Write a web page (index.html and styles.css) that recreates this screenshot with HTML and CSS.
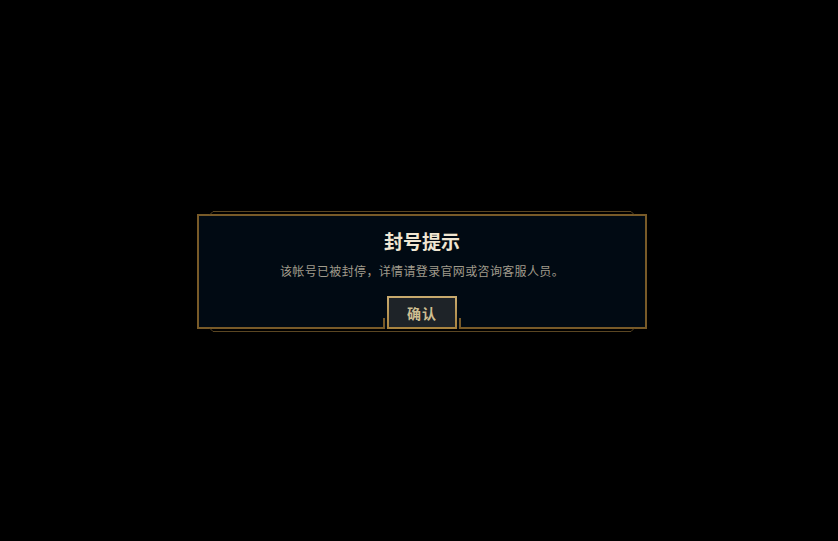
FILE: index.html
```html
<!DOCTYPE html>
<html lang="zh-CN">
<head>
<meta charset="utf-8">
<title>封号提示</title>
<link rel="stylesheet" href="styles.css">
</head>
<body>
<div class="stage">
  <div class="dialog">
    <svg class="deco" aria-hidden="true">
      <polyline points="13,0.5 16,-2.5 434,-2.5 437,0.5" />
      <polyline points="13,114.5 16,117.5 434,117.5 437,114.5" />
    </svg>
    <h1 class="title">封号提示</h1>
    <p class="message">该帐号已被封停，详情请登录官网或咨询客服人员。</p>
    <div class="actions">
      <div class="btn-wrap">
        <button class="btn">确认</button>
      </div>
    </div>
  </div>
</div>
</body>
</html>
```
FILE: styles.css
```css
html, body {
  margin: 0;
  padding: 0;
  background: #000;
  height: 100%;
}
.stage {
  height: 100%;
  box-sizing: border-box;
  padding: 2px 0 0 6px;
  display: flex;
  align-items: center;
  justify-content: center;
  font-family: "Noto Sans CJK SC", "Noto Sans", sans-serif;
}
.dialog {
  position: relative;
  width: 450px;
  box-sizing: border-box;
  border: 2px solid #785a28;
  background: #010a13;
  display: flex;
  flex-direction: column;
  align-items: center;
  padding-top: 13px;
}
.deco {
  position: absolute;
  left: -2px;
  top: -2px;
  width: 450px;
  height: 115px;
  overflow: visible;
  pointer-events: none;
}
.deco polyline {
  fill: none;
  stroke: #5b4622;
  stroke-width: 1;
}
.title {
  margin: 0;
  font-size: 19px;
  line-height: 24px;
  font-weight: 700;
  color: #f0e6d2;
}
.message {
  margin: 9px 0 0;
  font-size: 12px;
  line-height: 18px;
  letter-spacing: 0.35px;
  color: #a09b8c;
}
.actions {
  margin-top: 16px;
  margin-bottom: -2px;
  display: flex;
  justify-content: center;
}
.btn-wrap {
  position: relative;
  padding: 0 2px;
}
.btn-wrap::before {
  content: "";
  position: absolute;
  left: -2px;
  right: -2px;
  bottom: 0;
  height: 11px;
  background: #010a13;
  border-left: 2px solid #785a28;
  border-right: 2px solid #785a28;
}
.btn {
  position: relative;
  display: block;
  width: 70px;
  height: 33px;
  box-sizing: border-box;
  border: 2px solid transparent;
  border-image: linear-gradient(#c8aa6e, #a8833f) 1;
  background: #1e2328;
  color: #cdbe91;
  font-family: "Noto Sans CJK SC", "Noto Sans", sans-serif;
  font-size: 14px;
  font-weight: 700;
  letter-spacing: 1px;
  padding: 0;
  cursor: pointer;
}
```
